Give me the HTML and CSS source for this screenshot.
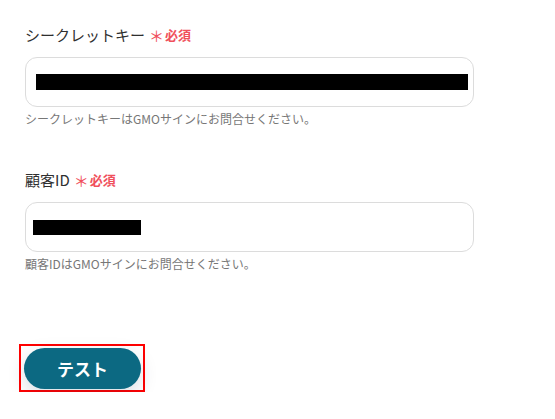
FILE: index.html
```html
<!DOCTYPE html>
<html lang="ja">
<head>
  <meta charset="UTF-8" />
  <title>GMOサイン設定</title>
  <link rel="stylesheet" href="styles.css">
</head>
<body>
  <div class="form">
    <div class="field">
      <div class="label">シークレットキー<span class="star">＊</span><span class="req">必須</span></div>
      <div class="input">
        <div class="mask mask-long"></div>
      </div>
      <div class="help">シークレットキーはGMOサインにお問合せください。</div>
    </div>

    <div class="field">
      <div class="label">顧客ID<span class="star">＊</span><span class="req">必須</span></div>
      <div class="input input-short">
        <div class="mask mask-short"></div>
      </div>
      <div class="help">顧客IDはGMOサインにお問合せください。</div>
    </div>

    <div class="actions">
      <div class="focus-box">
        <button class="btn">テスト</button>
      </div>
    </div>
  </div>
</body>
</html>
```

FILE: styles.css
```css
body {
  margin: 0;
  background-color: #ffffff;
  font-family: "Noto Sans CJK JP", "Noto Sans", sans-serif;
}

.form {
  width: 449px;
  padding: 23px 0 0 25px;
}

.field {
  margin-bottom: 40px;
}

.label {
  display: flex;
  align-items: center;
  height: 22px;
  font-size: 15px;
  font-weight: 400;
  color: #2f2f2f;
  margin-bottom: 12px;
}

.star {
  color: #f0505c;
  font-size: 15px;
  line-height: 22px;
  margin: 3px 1px 0 4px;
}

.req {
  color: #f0505c;
  font-size: 13px;
  font-weight: 700;
}

.input {
  height: 48px;
  border: 1px solid #dcdcdc;
  border-radius: 12px;
  display: flex;
  align-items: center;
  padding-left: 10px;
}

.input-short {
  padding-left: 7px;
}

.mask {
  background-color: #000000;
  height: 16px;
}

.mask-long {
  width: 432px;
}

.mask-short {
  width: 108px;
  height: 15px;
}

.help {
  font-size: 12px;
  color: #777777;
  line-height: 18px;
  margin-top: 3px;
}

.actions {
  padding-top: 31px;
  margin-left: -6px;
}

.focus-box {
  display: inline-block;
  border: 2px solid #ff0000;
  padding: 2px 2px 1px 3px;
}

.btn {
  display: block;
  width: 117px;
  height: 41px;
  border: none;
  border-radius: 21px;
  background-color: #0c6982;
  color: #ffffff;
  font-family: "Noto Sans CJK JP", sans-serif;
  font-size: 17px;
  font-weight: 700;
  box-shadow: 0 6px 18px rgba(0, 40, 80, 0.15);
  cursor: pointer;
}
```
